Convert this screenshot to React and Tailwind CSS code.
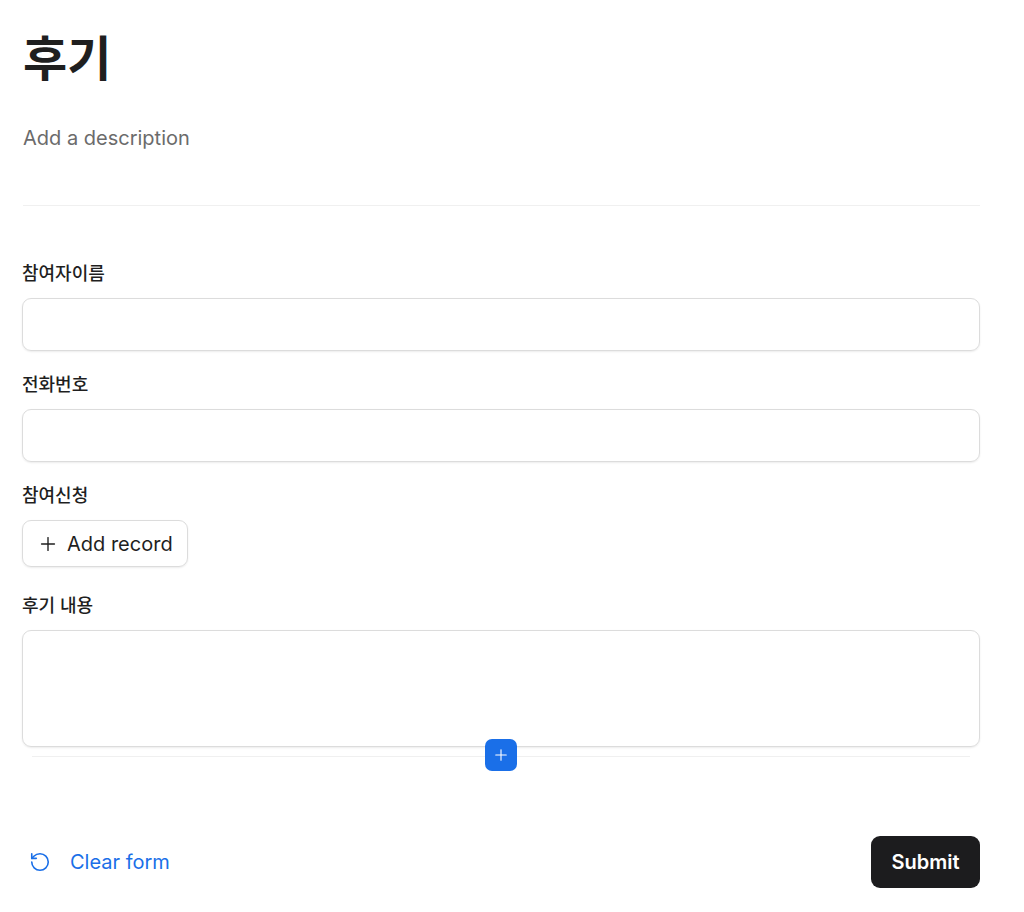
import React from 'react'
import { Plus, RotateCcw } from 'lucide-react'

function Field({ label, children, className = '' }) {
  return (
    <div className={className}>
      <p className="text-[18px] font-medium text-[#1f1f1f] leading-[26px] mb-[11px]">{label}</p>
      {children}
    </div>
  )
}

export default function App() {
  return (
    <div className="min-h-[912px] bg-white px-[22px] pt-[26px] font-['Inter','Noto_Sans_CJK_KR',sans-serif]">
      <div className="w-[958px]">
        <h1 className="text-[48px] font-bold text-[#1f1f1f] leading-[66px] pl-[1px]">후기</h1>
        <p className="mt-[33px] text-[20px] text-[#6b6b6b] leading-[26px] pl-[1px]">Add a description</p>
        <div className="mt-[54px] ml-[1px] h-px bg-[#f0f0f0]" />

        <div className="mt-[55px] flex flex-col gap-[21px]">
          <Field label="참여자이름">
            <div className="h-[53px] rounded-[9px] border border-[#dcdcdc] shadow-[0_1px_2px_rgba(0,0,0,0.08)]" />
          </Field>
          <Field label="전화번호">
            <div className="h-[53px] rounded-[9px] border border-[#dcdcdc] shadow-[0_1px_2px_rgba(0,0,0,0.08)]" />
          </Field>
          <Field label="참여신청">
            <button className="h-[47px] w-[166px] flex items-center gap-[8px] pl-[14px] rounded-[9px] border border-[#dcdcdc] shadow-[0_1px_2px_rgba(0,0,0,0.08)] text-[20px] text-[#1f1f1f]">
              <Plus size={22} strokeWidth={1.5} />
              <span>Add record</span>
            </button>
          </Field>
          <Field label="후기 내용" className="mt-[5px]">
            <div className="h-[117px] rounded-[9px] border border-[#dcdcdc] shadow-[0_1px_2px_rgba(0,0,0,0.08)]" />
            <div className="relative mx-[10px] mt-[9px] h-px bg-[#f0f0f0]">
              <button className="absolute left-[453px] top-[-17px] w-[32px] h-[32px] rounded-[7px] bg-[#1a6fe8] flex items-center justify-center text-white">
                <Plus size={18} strokeWidth={1.5} />
              </button>
            </div>
          </Field>
        </div>

        <div className="mt-[79px] flex items-center justify-between">
          <button className="flex items-center gap-[19px] pl-[7px] text-[#1a6fe8] text-[20px]">
            <RotateCcw size={22} strokeWidth={1.75} />
            <span>Clear form</span>
          </button>
          <button className="h-[52px] w-[109px] rounded-[9px] bg-[#1c1c1e] text-white text-[20px] font-semibold">
            Submit
          </button>
        </div>
      </div>
    </div>
  )
}
